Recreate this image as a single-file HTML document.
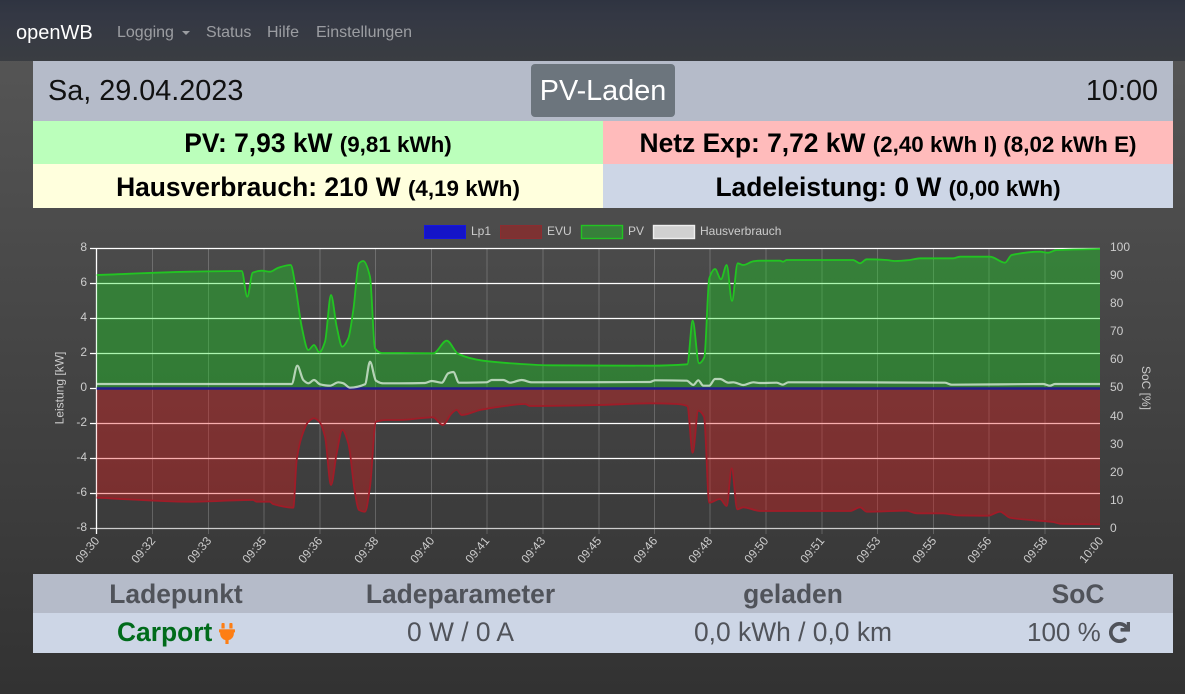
<!DOCTYPE html>
<html lang="de"><head><meta charset="utf-8"><title>openWB</title>
<style>
*{box-sizing:border-box}
html,body{margin:0;padding:0}
body{width:1185px;height:694px;overflow:hidden;position:relative;font-family:"Liberation Sans",sans-serif;background:linear-gradient(#585858,#323232)}
.nav{position:absolute;left:0;top:0;width:1185px;height:61px;background:linear-gradient(#2f3441,#343844 25%,#3a3d42)}
.abs{position:absolute;white-space:nowrap}
.nav a{position:absolute;top:21px;font-size:16px;line-height:24px;color:rgba(255,255,255,.5);text-decoration:none}
.brand{position:absolute;left:16px;top:18px;font-size:20px;line-height:30px;color:#fff}
.caret{position:absolute;left:182px;top:31px;border-top:4.8px solid rgba(255,255,255,.5);border-left:4.8px solid transparent;border-right:4.8px solid transparent}
.box{position:absolute}
.cell{position:absolute;text-align:center;font-weight:bold;font-size:26.4px;color:#000;white-space:nowrap}
.cell small{font-size:22.4px;font-weight:bold}
.h{position:absolute;transform:translateX(-50%);white-space:nowrap;font-size:26.4px;line-height:40px;font-weight:bold;color:#50535a;top:574px}
.v{position:absolute;transform:translateX(-50%);white-space:nowrap;font-size:26.4px;line-height:40px;color:#50535a;top:612px}
svg text{font-family:"Liberation Sans",sans-serif;font-size:12px;fill:#ccc}
</style></head><body>
<div class="nav">
<span class="brand">openWB</span>
<a style="left:117px">Logging</a><span class="caret"></span>
<a style="left:206px">Status</a><a style="left:267px">Hilfe</a><a style="left:316px">Einstellungen</a>
</div>
<div class="box" style="left:33px;top:61px;width:1140px;height:60px;background:#b5bbc9"></div>
<div class="abs" style="left:48px;top:61px;font-size:28.8px;line-height:60px;color:#111">Sa, 29.04.2023</div>
<div class="abs" style="left:531px;top:64px;width:144px;height:53px;background:#6c757d;border-radius:4px;color:#fff;font-size:28.8px;line-height:54px;text-align:center">PV-Laden</div>
<div class="abs" style="right:27px;top:61px;font-size:28.8px;line-height:60px;color:#111">10:00</div>

<div class="cell" style="left:33px;top:121px;width:570px;height:43px;line-height:45px;background:#bbffbb">PV: 7,93 kW <small>(9,81 kWh)</small></div>
<div class="cell" style="left:603px;top:121px;width:570px;height:43px;line-height:45px;background:#ffbbbb">Netz Exp: 7,72 kW <small>(2,40 kWh I) (8,02 kWh E)</small></div>
<div class="cell" style="left:33px;top:164px;width:570px;height:44px;line-height:46px;background:#ffffdd">Hausverbrauch: 210 W <small>(4,19 kWh)</small></div>
<div class="cell" style="left:603px;top:164px;width:570px;height:44px;line-height:46px;background:#cdd6e6">Ladeleistung: 0 W <small>(0,00 kWh)</small></div>

<svg class="abs" style="left:0;top:215px" width="1185" height="355" viewBox="0 215 1185 355">
<!-- legend -->
<rect x="424.5" y="225.5" width="41" height="13" fill="#1414c8" stroke="#1616e0"/>
<rect x="500.5" y="225.5" width="41" height="13" fill="#7d3232" stroke="#8c2c30"/>
<rect x="581.5" y="225.5" width="41" height="13" fill="#37803a" stroke="#22c422" stroke-width="1.4"/>
<rect x="653.5" y="225.5" width="41" height="13" fill="#d0d0d0" stroke="#eee" stroke-width="1.4"/>
<text x="471" y="235">Lp1</text><text x="547" y="235">EVU</text><text x="628" y="235">PV</text><text x="700" y="235">Hausverbrauch</text>
<!-- vertical grid -->
<g stroke="rgba(255,255,255,.2)" stroke-width="1">
<path d="M152.5 248V534M208.5 248V534M264 248V534M320 248V534M375.5 248V534M431.5 248V534M487 248V534M543 248V534M599 248V534M654.5 248V534M710 248V534M766 248V534M822 248V534M877.5 248V534M933.5 248V534M989 248V534M1045 248V534"/>
</g>
<!-- horizontal grid -->
<g stroke="#fff" stroke-width="1.3">
<path d="M90 248.5H1100M90 283.5H1100M90 318.5H1100M90 353.5H1100M90 388.5H1100M90 423.5H1100M90 458.5H1100M90 493.5H1100"/>
<path d="M90 528.5H1100" stroke="#ccc"/>
<path d="M96.5 248V534"/>
</g>
<!-- PV -->
<path class="f" fill="rgba(20,228,28,.35)" stroke="none" d="M96.7 388L96.7 275 190 271.7 241.7 271 247.3 296.7 252.7 272.7 261.7 270.7 270 271.7 278.3 267.7 290.7 265 295 283.3 301.7 326.7 308.3 350 314 345 319.3 352.3 325 341.7 331 295 336.7 326.7 342.3 346.7 348.3 338.3 353.3 310 359 263.3 363.3 261 370 276.7 375 348.3 381.7 353 400 353 433.3 353.3 446.7 340.7 458.3 354 483 360.7 516.7 363.7 550 365.3 650 365.7 687.3 364.3 692.7 320.7 699 363.3 704.3 357.3 709.3 278.3 715 269 721 279.3 726.7 265 732 301 737.7 263.3 743.3 265 753.3 261.3 760 260.7 780 260.7 783 261.7 786.7 260 853 260 860 263.3 866.7 259.3 886.7 260 895 261 910 260 920 258.3 953 258.3 960 256.7 990 256.7 1005 262.7 1011.7 255 1040 251.7 1048 252.7 1056.7 250 1100 249 1100 388Z"/>
<path class="l" fill="none" stroke="#22c422" stroke-width="1.8" stroke-linejoin="round" d="M96.7 275 190 271.7 241.7 271 247.3 296.7 252.7 272.7 261.7 270.7 270 271.7 278.3 267.7 290.7 265 295 283.3 301.7 326.7 308.3 350 314 345 319.3 352.3 325 341.7 331 295 336.7 326.7 342.3 346.7 348.3 338.3 353.3 310 359 263.3 363.3 261 370 276.7 375 348.3 381.7 353 400 353 433.3 353.3 446.7 340.7 458.3 354 483 360.7 516.7 363.7 550 365.3 650 365.7 687.3 364.3 692.7 320.7 699 363.3 704.3 357.3 709.3 278.3 715 269 721 279.3 726.7 265 732 301 737.7 263.3 743.3 265 753.3 261.3 760 260.7 780 260.7 783 261.7 786.7 260 853 260 860 263.3 866.7 259.3 886.7 260 895 261 910 260 920 258.3 953 258.3 960 256.7 990 256.7 1005 262.7 1011.7 255 1040 251.7 1048 252.7 1056.7 250 1100 249"/>
<!-- EVU -->
<path class="f" fill="rgba(237,23,23,.35)" stroke="none" d="M96.7 389L96.7 497.7 190 501.7 253 500 256.7 501.7 270 501.7 273 504 293.3 507.7 296.7 460 301.7 436.7 308 422.3 314 418.3 319.3 421.7 325 436.7 331 485 336.7 453.3 342.3 430 348.3 443.3 355 493 359 510 365 511.7 370 486.7 376 421.7 386.7 420 400 420 433 417.3 442.7 425 451.7 413.3 456.7 410 461.7 415 480 410 500 406.7 525 404 530 406 600 405 650 403.3 676.7 404 687.3 406 692.7 452.7 698.3 410.7 704 416.7 709.3 502.7 720 499 726.7 506 731.7 468.3 737.3 509.3 743.3 507.3 760 511 850 511 860 507.3 866.7 511.7 906.7 510.7 916.7 513.3 943 513.3 956.7 515.3 988 515.7 1000 511.7 1010 517.7 1030 520 1053 522 1060 523.7 1100 524.3 1100 389Z"/>
<path class="l" fill="none" stroke="#a01c28" stroke-width="1.8" stroke-linejoin="round" d="M96.7 497.7 190 501.7 253 500 256.7 501.7 270 501.7 273 504 293.3 507.7 296.7 460 301.7 436.7 308 422.3 314 418.3 319.3 421.7 325 436.7 331 485 336.7 453.3 342.3 430 348.3 443.3 355 493 359 510 365 511.7 370 486.7 376 421.7 386.7 420 400 420 433 417.3 442.7 425 451.7 413.3 456.7 410 461.7 415 480 410 500 406.7 525 404 530 406 600 405 650 403.3 676.7 404 687.3 406 692.7 452.7 698.3 410.7 704 416.7 709.3 502.7 720 499 726.7 506 731.7 468.3 737.3 509.3 743.3 507.3 760 511 850 511 860 507.3 866.7 511.7 906.7 510.7 916.7 513.3 943 513.3 956.7 515.3 988 515.7 1000 511.7 1010 517.7 1030 520 1053 522 1060 523.7 1100 524.3"/>
<!-- Lp1 -->
<path d="M96.7 388.5H1100" stroke="#20208c" stroke-width="2.4" fill="none"/>
<!-- Haus -->
<path class="l" fill="none" stroke="rgba(225,240,225,.75)" stroke-width="2.2" stroke-linejoin="round" d="M96.7 384 291.7 384 297.3 365.7 303.3 380 308.3 383.3 314 380 320 384.3 330 385.7 338.3 382.3 343.3 383.3 350 387.7 365 384.3 370 361.7 376 380.7 383.3 383.3 400 383.3 425 383 431.7 381 441.7 382.7 448.3 373.3 453.3 372 459 382.7 486.7 382.3 491.7 380 503.3 380 510 382.7 521.7 380 531.7 382.3 650 382 655 380.3 686.7 380.7 693.3 385 698.3 380.3 703.3 385.7 709.3 385.7 715 379 720 379 728.3 382.7 733.3 382.3 743.3 385 753.3 382.3 760 383 776.7 382.7 782.7 384.7 788.3 382.3 945 382.7 951.7 384.7 1043.3 384 1050 385.7 1055 384 1100 384"/>
<!-- left axis -->
<g text-anchor="end">
<text x="87" y="251">8</text><text x="87" y="286">6</text><text x="87" y="321">4</text><text x="87" y="356">2</text><text x="87" y="391">0</text><text x="87" y="426">-2</text><text x="87" y="461">-4</text><text x="87" y="496">-6</text><text x="87" y="531">-8</text>
</g>
<!-- right axis -->
<text x="1110" y="251">100</text><text x="1110" y="279">90</text><text x="1110" y="307">80</text><text x="1110" y="335">70</text><text x="1110" y="363">60</text><text x="1110" y="391">50</text><text x="1110" y="420">40</text><text x="1110" y="448">30</text><text x="1110" y="476">20</text><text x="1110" y="504">10</text><text x="1110" y="532">0</text>
<text transform="translate(63.5,388) rotate(-90)" text-anchor="middle">Leistung [kW]</text>
<text transform="translate(1142,388) rotate(90)" text-anchor="middle">SoC [%]</text>
<!-- x labels -->
<g text-anchor="end">
<text transform="translate(100,541) rotate(-50)">09:30</text>
<text transform="translate(156,541) rotate(-50)">09:32</text>
<text transform="translate(212,541) rotate(-50)">09:33</text>
<text transform="translate(267,541) rotate(-50)">09:35</text>
<text transform="translate(323,541) rotate(-50)">09:36</text>
<text transform="translate(379,541) rotate(-50)">09:38</text>
<text transform="translate(435,541) rotate(-50)">09:40</text>
<text transform="translate(490,541) rotate(-50)">09:41</text>
<text transform="translate(546,541) rotate(-50)">09:43</text>
<text transform="translate(602,541) rotate(-50)">09:45</text>
<text transform="translate(658,541) rotate(-50)">09:46</text>
<text transform="translate(713,541) rotate(-50)">09:48</text>
<text transform="translate(769,541) rotate(-50)">09:50</text>
<text transform="translate(825,541) rotate(-50)">09:51</text>
<text transform="translate(881,541) rotate(-50)">09:53</text>
<text transform="translate(937,541) rotate(-50)">09:55</text>
<text transform="translate(992,541) rotate(-50)">09:56</text>
<text transform="translate(1048,541) rotate(-50)">09:58</text>
<text transform="translate(1104,541) rotate(-50)">10:00</text>
</g>
</svg>

<div class="box" style="left:33px;top:574px;width:1140px;height:39px;background:#b5bbc9"></div>
<div class="box" style="left:33px;top:613px;width:1140px;height:40px;background:#cdd6e6"></div>
<div class="h" style="left:176px">Ladepunkt</div>
<div class="h" style="left:460.500px">Ladeparameter</div>
<div class="h" style="left:793px">geladen</div>
<div class="h" style="left:1078px">SoC</div>
<div class="abs" style="left:117px;top:612px;font-size:26.4px;line-height:40px;font-weight:bold;color:#006b1b">Carport</div>
<svg class="abs" style="left:219px;top:623px" width="16" height="21" viewBox="0 0 384 512"><path fill="#fd7e14" stroke="#fd7e14" stroke-width="14" d="M320,32a32,32,0,0,0-64,0v96h64Zm48,128H16A16,16,0,0,0,0,176v32a16,16,0,0,0,16,16H32v32A160.07,160.07,0,0,0,160,412.8V512h64V412.8A160.07,160.07,0,0,0,352,256V224h16a16,16,0,0,0,16-16V176A16,16,0,0,0,368,160ZM128,32a32,32,0,0,0-64,0v96h64Z"/></svg>
<div class="v" style="left:460.500px">0 W / 0 A</div>
<div class="v" style="left:793px">0,0 kWh / 0,0 km</div>
<div class="abs" style="left:1027px;top:612px;font-size:26px;line-height:40px;color:#50535a">100 %</div>
<svg class="abs" style="left:1109px;top:622px" width="21" height="21" viewBox="0 0 512 512"><path fill="#50535a" stroke="#50535a" stroke-width="18" d="M500.33 0h-47.41a12 12 0 0 0-12 12.57l4 82.76A247.42 247.42 0 0 0 256 8C119.34 8 8 119.53 8 256.19 8 393 119.1 504 256 504a247.1 247.1 0 0 0 166.18-63.91 12 12 0 0 0 .48-17.43l-34-34a12 12 0 0 0-16.38-.55A176 176 0 1 1 402.1 157.8l-101.53-4.87a12 12 0 0 0-12.57 12v47.41a12 12 0 0 0 12 12h200.33a12 12 0 0 0 12-12V12a12 12 0 0 0-12-12z"/></svg>
<script>
(function(){
/* monotone cubic interpolation: rounds corners without overshooting */
function smooth(p){
  var n=p.length,sl=[],m=[],s='',i;
  for(i=0;i<n-1;i++)sl.push((p[i+1][1]-p[i][1])/(p[i+1][0]-p[i][0]));
  m[0]=sl[0];m[n-1]=sl[n-2];
  for(i=1;i<n-1;i++){
    m[i]=(sl[i-1]*sl[i]<=0)?0:2*sl[i-1]*sl[i]/(sl[i-1]+sl[i]);
  }
  for(i=0;i<n-1;i++){
    var h=(p[i+1][0]-p[i][0])/3;
    s+='C'+(p[i][0]+h).toFixed(1)+' '+(p[i][1]+m[i]*h).toFixed(1)+' '+(p[i+1][0]-h).toFixed(1)+' '+(p[i+1][1]-m[i+1]*h).toFixed(1)+' '+p[i+1][0]+' '+p[i+1][1];
  }
  return s;
}
function parse(d){
  var m=d.match(/-?[\d.]+/g),r=[];
  for(var i=0;i+1<m.length;i+=2)r.push([+m[i],+m[i+1]]);
  return r;
}
var els=document.querySelectorAll('path.l,path.f');
for(var i=0;i<els.length;i++){
  var e=els[i],p=parse(e.getAttribute('d'));
  if(e.getAttribute('class')==='f'){
    var base=p[0],end=p[p.length-1],q=p.slice(1,-1);
    e.setAttribute('d','M'+base[0]+' '+base[1]+'L'+q[0][0]+' '+q[0][1]+smooth(q)+'L'+end[0]+' '+end[1]+'Z');
  }else{
    e.setAttribute('d','M'+p[0][0]+' '+p[0][1]+smooth(p));
  }
}
})();
</script>
</body></html>
